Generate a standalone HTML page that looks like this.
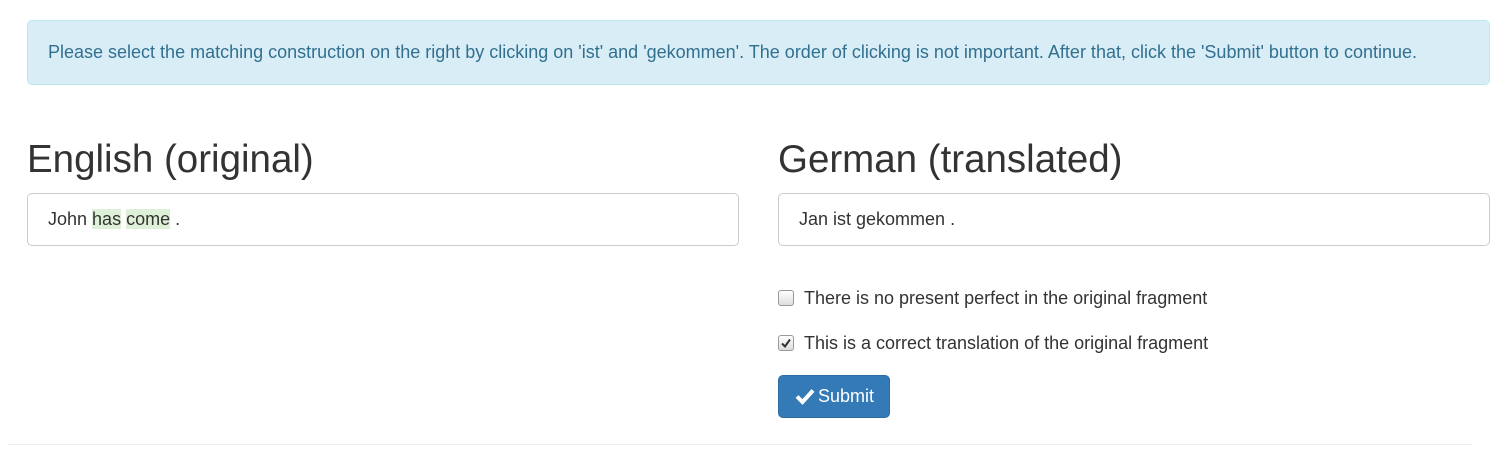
<!DOCTYPE html>
<html><head><style>
body{margin:0;width:1500px;height:461px;background:#fff;font-family:"Liberation Sans",sans-serif;color:#333;position:relative;overflow:hidden}
.alert{position:absolute;left:27px;top:20px;width:1461px;height:63px;background:#d9edf7;border:1px solid #bce8f1;border-radius:5px;color:#31708f;font-size:18px;line-height:63px;box-sizing:content-box}
.alert span{position:absolute;left:20px;top:0}
h2{position:absolute;margin:0;font-weight:400;font-size:38.5px;line-height:40px;top:140px}
.box{position:absolute;top:193px;height:51px;width:710px;border:1px solid #ccc;border-radius:5px;font-size:18px;line-height:51px;box-sizing:content-box}
.box span.t{position:absolute;left:20px}
.hl{background:#dff0d8}
.cb{position:absolute;left:778px;width:16px;height:16px;border:1px solid #999;border-radius:3px;background:linear-gradient(#fff,#ddd);box-sizing:border-box}
.lbl{position:absolute;left:804px;font-size:18px;line-height:20px}
.btn{position:absolute;left:778px;top:375px;width:112px;height:43px;background:#337ab7;border:1px solid #2e6da4;border-radius:5px;box-sizing:border-box;color:#fff;font-size:18px;line-height:41px}
hr{position:absolute;left:8px;top:444px;width:1464px;margin:0;border:0;border-top:1px solid #eee}
</style></head><body>
<div class="alert"><span>Please select the matching construction on the right by clicking on 'ist' and 'gekommen'. The order of clicking is not important. After that, click the 'Submit' button to continue.</span></div>
<h2 style="left:27px">English (original)</h2>
<h2 style="left:778px">German (translated)</h2>
<div class="box" style="left:27px"><span class="t">John <span class="hl">has</span> <span class="hl">come</span> .</span></div>
<div class="box" style="left:778px"><span class="t">Jan ist gekommen .</span></div>
<div class="cb" style="top:290px"></div>
<div class="lbl" style="top:288px">There is no present perfect in the original fragment</div>
<div class="cb" style="top:335px"><svg width="14" height="14" viewBox="0 0 14 14" style="position:absolute;left:0;top:0"><path d="M3 7.5L6 10.5L11 3.5" fill="none" stroke="#333" stroke-width="2"/></svg></div>
<div class="lbl" style="top:333px">This is a correct translation of the original fragment</div>
<div class="btn"><svg width="20" height="18" viewBox="0 0 20 18" style="position:absolute;left:16px;top:11px"><path d="M2 9.5L7.5 15L18 3.5" fill="none" stroke="#fff" stroke-width="4"/></svg><span style="position:absolute;left:39px">Submit</span></div>
<hr>
</body></html>
